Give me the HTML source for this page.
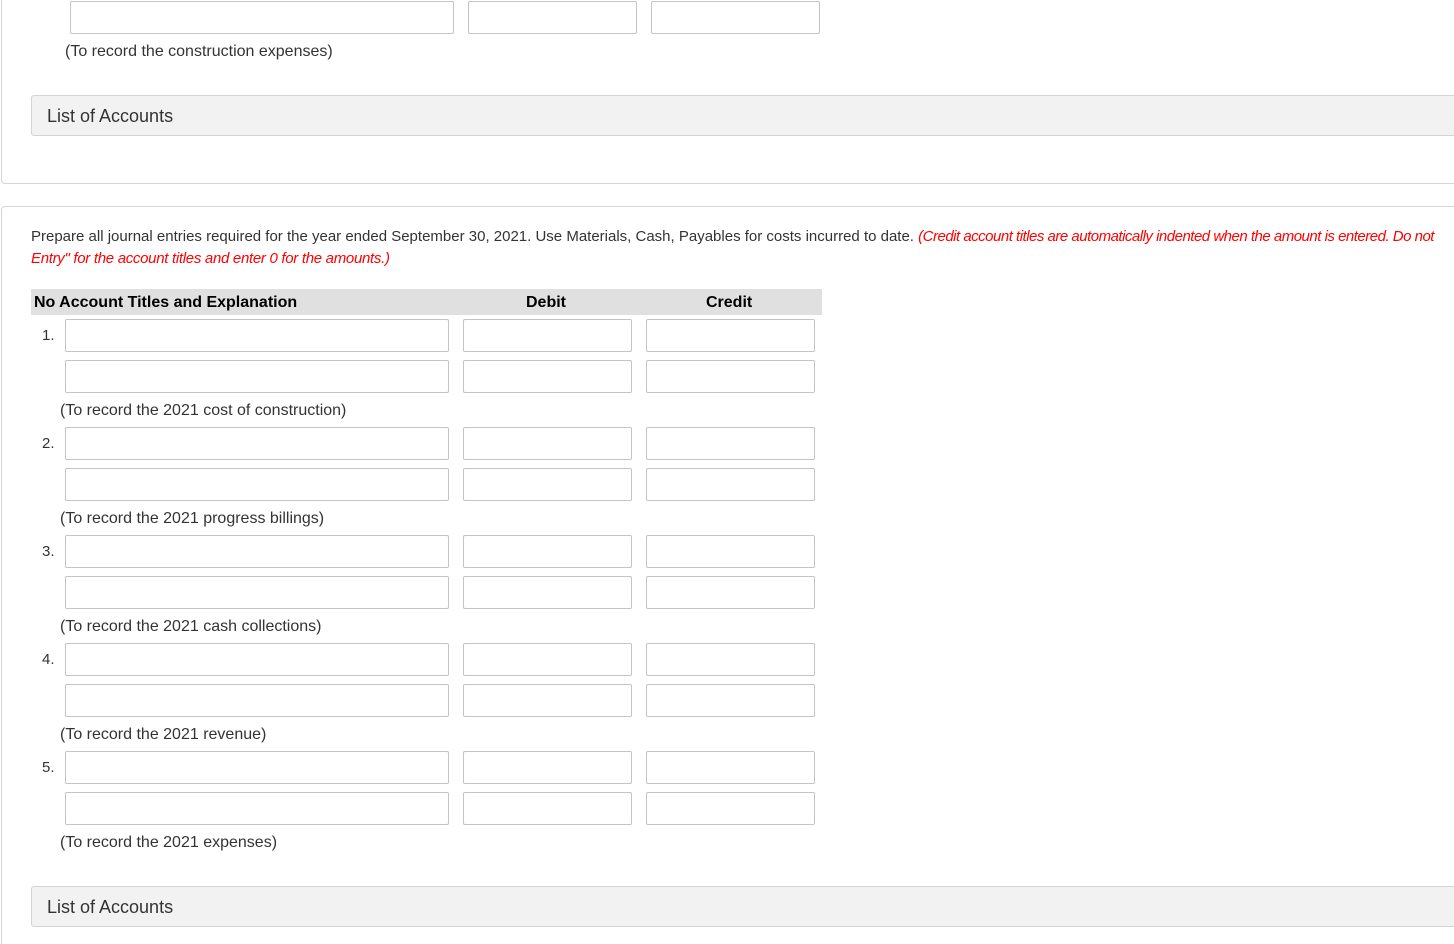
<!DOCTYPE html>
<html><head><style>
*{box-sizing:border-box;margin:0;padding:0}
html,body{width:1454px;height:944px;overflow:hidden}
body{background:#fff;font-family:"Liberation Sans",sans-serif;color:#333;position:relative}
#w{position:absolute;left:0;top:0;width:1454px;height:944px;overflow:hidden}
.a{position:absolute}
.in{position:absolute;border:1px solid #c4c4c4;border-radius:2px;background:#fff;height:33px}
.card{position:absolute;border:1px solid #d6d6d6;border-radius:4px;background:#fff}
.loa{position:absolute;left:31px;width:1430px;height:41px;background:#f2f2f2;border:1px solid #d4d4d4;border-radius:3px;font-size:18px;color:#333;padding:10px 0 0 15px}
.t{position:absolute;font-size:16px;color:#333;white-space:nowrap}
.n{position:absolute;left:42px;font-size:15px;color:#333}
</style></head><body><div id="w">
<div class="card" style="left:1px;top:-10px;width:1470px;height:194px"></div>
<div class="in" style="left:70px;top:1px;width:384px"></div>
<div class="in" style="left:468px;top:1px;width:169px"></div>
<div class="in" style="left:651px;top:1px;width:169px"></div>
<div class="t" style="left:65px;top:43px">(To record the construction expenses)</div>
<div class="loa" style="top:95px">List of Accounts</div>

<div class="card" style="left:1px;top:206px;width:1470px;height:760px"></div>
<div class="t" style="left:31px;top:226px;font-size:15px;line-height:22px">Prepare all journal entries required for the year ended September 30, 2021. Use Materials, Cash, Payables for costs incurred to date. <i style="color:#f00;letter-spacing:-0.5px">(Credit account titles are automatically indented when the amount is entered. Do not</i><br><i style="color:#f00;letter-spacing:-0.3px">Entry" for the account titles and enter 0 for the amounts.)</i></div>
<div class="a" style="left:31px;top:289px;width:791px;height:26px;background:#e0e0e0;font-weight:bold;font-size:16px;color:#000">
<span class="a" style="left:3px;top:5px">No Account Titles and Explanation</span>
<span class="a" style="left:495px;top:5px">Debit</span>
<span class="a" style="left:675px;top:5px">Credit</span>
</div>
<div id="rows"></div>
<script>
var labels=["(To record the 2021 cost of construction)","(To record the 2021 progress billings)","(To record the 2021 cash collections)","(To record the 2021 revenue)","(To record the 2021 expenses)"];
var h="";
for(var i=0;i<5;i++){var y=319+i*108;
h+='<div class="n" style="top:'+(y+8)+'px">'+(i+1)+'.</div>';
[y,y+41].forEach(function(t){h+='<div class="in" style="left:65px;top:'+t+'px;width:384px"></div><div class="in" style="left:463px;top:'+t+'px;width:169px"></div><div class="in" style="left:646px;top:'+t+'px;width:169px"></div>';});
h+='<div class="t" style="left:60px;top:'+(y+83)+'px">'+labels[i]+'</div>';}
document.getElementById("rows").innerHTML=h;
</script>
<div class="loa" style="top:886px">List of Accounts</div>
</div></body></html>
